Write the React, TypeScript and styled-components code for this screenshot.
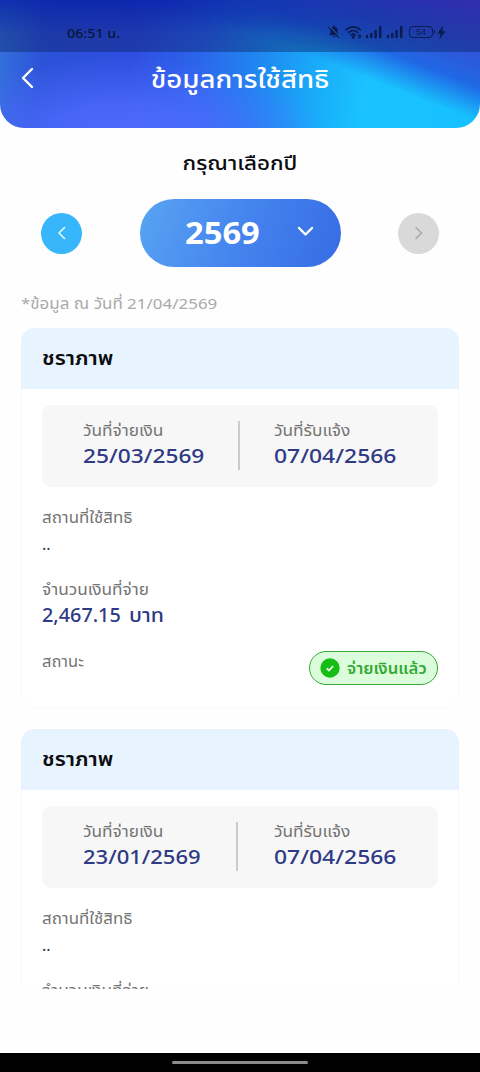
import React from "react";
import styled, { createGlobalStyle } from "styled-components";

const GlobalStyle = createGlobalStyle`
  * { box-sizing: border-box; }
  body { margin: 0; background: #fefefe; font-family: "Noto Sans", "Noto Sans Thai", sans-serif; }
  button { border: 0; padding: 0; font: inherit; }
`;

const Screen = styled.div`
  width: 480px;
  height: 1072px;
  display: flex;
  flex-direction: column;
  overflow: hidden;
  background: #fefefe;
`;

const Header = styled.header`
  height: 128px;
  flex: none;
  border-radius: 0 0 24px 24px;
  overflow: hidden;
  background:
    linear-gradient(21deg, rgba(32, 96, 224, 0) 61%, rgba(34, 88, 224, 0.85) 72%, #2f55d8 83%, #5048d8 100%),
    linear-gradient(180deg, rgba(10, 56, 210, 0.65) 0%, rgba(10, 70, 210, 0) 26%),
    radial-gradient(ellipse 200px 80px at 125px 136px, #4f6bff 0%, rgba(79, 107, 255, 0.75) 40%, rgba(77, 105, 255, 0) 100%),
    linear-gradient(96deg, #3474dc 0%, #2c52d8 10%, #2e4ee0 28%, #2b66ec 42%, #1f88f0 54%, #19acfa 66%, #1ac3ff 76%, #16c0ff 100%);
`;

const StatusBar = styled.div`
  height: 52px;
  display: flex;
  align-items: center;
  justify-content: space-between;
  padding: 13px 34px 0 67px;
  background: linear-gradient(180deg, rgba(0, 0, 110, 0.38), rgba(8, 30, 90, 0.4));
`;

const StatusIcons = styled.div`
  display: flex;
  align-items: center;
  margin-top: -1px;
`;

const TitleBar = styled.div`
  height: 52px;
  display: grid;
  grid-template-columns: 54px 1fr 54px;
  align-items: center;
`;

const IconButton = styled.button`
  display: flex;
  align-items: center;
  justify-content: center;
  height: 40px;
  background: none;
`;

interface TextProps {
  $size: number;
  $line: number;
  $color?: string;
  $weight?: number;
  $stretch?: number;
  $align?: string;
}

const Text = styled.div<TextProps>`
  font-size: ${(p) => p.$size}px;
  line-height: ${(p) => p.$line}px;
  height: ${(p) => p.$line}px;
  color: ${(p) => p.$color ?? "#0b0b10"};
  font-weight: ${(p) => p.$weight ?? 400};
  text-align: ${(p) => p.$align ?? "left"};
  white-space: nowrap;
  transform: scaleX(${(p) => p.$stretch ?? 1});
  transform-origin: ${(p) => p.$align ?? "left"} center;
`;

const Label = styled.div<{ $stretch?: number }>`
  height: 25px;
  font-size: 15px;
  line-height: 25px;
  color: #747474;
  white-space: nowrap;
  transform: scaleX(${(p) => p.$stretch ?? 1.15});
  transform-origin: left center;
`;

const YearSection = styled.section`
  flex: none;
  padding-top: 19px;
`;

const YearPicker = styled.div`
  display: flex;
  align-items: center;
  justify-content: space-between;
  padding: 0 41px;
  margin-top: 20px;
`;

const RoundButton = styled.button<{ $bg: string }>`
  width: 41px;
  height: 41px;
  border-radius: 50%;
  display: flex;
  align-items: center;
  justify-content: center;
  background: ${(p) => p.$bg};
`;

const YearPill = styled.button`
  width: 201px;
  height: 68px;
  border-radius: 34px;
  display: flex;
  align-items: center;
  justify-content: space-between;
  padding: 0 27px 3px 45px;
  background: linear-gradient(110deg, #58a4f2 0%, #4584ee 50%, #366ce4 100%);
`;

const List = styled.main`
  height: 700px;
  flex: none;
  overflow: hidden;
  padding: 0 21px;
  margin-top: 22px;
`;

const Card = styled.article`
  height: 380px;
  margin-top: 11px;
  border-radius: 14px;
  overflow: hidden;
  background: #fff;

  & + & { margin-top: 21px; }
`;

const CardHead = styled.div`
  height: 61px;
  padding: 15px 21px;
  background: #e7f3fe;
`;

const CardBody = styled.div`
  height: 319px;
  padding: 16px 20px 0;
  border: 1px solid #f7fafb;
  border-top: 0;
  border-radius: 0 0 14px 14px;
`;

const Dates = styled.div`
  height: 82px;
  display: flex;
  align-items: center;
  border-radius: 9px;
  padding-left: 41px;
  background: #f7f7f7;
`;

const DateItem = styled.div<{ $width: number }>`
  width: ${(p) => p.$width}px;
  height: 56px;
`;

const Divider = styled.div<{ $gap: number }>`
  width: 2px;
  height: 49px;
  background: #cbcbcb;
  margin: 0 ${(p) => p.$gap}px 1px 0;
`;

const Place = styled.div`
  margin-top: 18px;
`;

const Payment = styled.div`
  margin-top: 19px;
`;

const Amount = styled.div`
  display: flex;
  gap: 7px;
`;

const StatusRow = styled.div`
  display: flex;
  justify-content: space-between;
  margin-top: 22px;
`;

const Badge = styled.div`
  width: 129px;
  height: 34px;
  margin-top: 2px;
  display: flex;
  align-items: center;
  gap: 7px;
  padding-left: 10px;
  border: 1.5px solid #36a936;
  border-radius: 18px;
  background: #dcfddc;
`;

const BottomNav = styled.footer`
  height: 19px;
  margin-top: auto;
  flex: none;
  display: flex;
  justify-content: center;
  padding-top: 8px;
  background: #000;
`;

const Handle = styled.div`
  width: 136px;
  height: 3px;
  border-radius: 2px;
  background: #8b8b8b;
`;

const Chevron = ({ d, w, h, color, stroke }: { d: string; w: number; h: number; color: string; stroke: number }) => (
  <svg width={w} height={h} viewBox={`0 0 ${w} ${h}`} fill="none" stroke={color} strokeWidth={stroke} strokeLinecap="round" strokeLinejoin="round">
    <path d={d} />
  </svg>
);

const ink = "#0b1c50";

const BatteryIcon = styled.div`
  position: relative;
  width: 24px;
  height: 12px;
  margin-left: 3px;
  border: 1px solid ${ink};
  border-radius: 4px;
  color: ${ink};
  font: 9px/10px "Liberation Sans", sans-serif;
  text-align: center;

  &::after {
    content: "";
    position: absolute;
    right: -3px;
    top: 3px;
    width: 1px;
    height: 4px;
    background: ${ink};
  }
`;

const WifiSvg = styled.svg`
  margin: 0 1px 0 4px;
`;

const BoltSvg = styled.svg`
  margin-left: 4px;
`;

const Signal = () => (
  <svg width="21" height="14" viewBox="0 0 21 14" stroke={ink} strokeWidth="2.5" strokeLinecap="round">
    <path d="M3 12v-1M7.3 12V9M11.6 12V6M16.2 12V2" />
  </svg>
);

const SystemIcons = () => (
  <StatusIcons>
    <svg width="14" height="14" viewBox="0 0 14 14">
      <path d="M7 1.4c-2.4 0-3.7 1.8-3.7 4v3L2 10.2h10l-1.3-1.8v-3c0-2.2-1.3-4-3.7-4z" fill={ink} />
      <path d="M5.6 11.3h2.8c-.2 1.4-2.6 1.4-2.8 0zM6.5 0h1v2h-1z" fill={ink} />
      <path d="M2 .9l11 11" stroke="#165ba6" strokeWidth="1.1" />
      <path d="M1.2 1.8l11 11" stroke={ink} strokeWidth="1.1" />
    </svg>
    <WifiSvg width="18" height="15" viewBox="0 0 18 15" fill="none" stroke={ink} strokeWidth="1.7" strokeLinecap="round">
      <path d="M1.2 4.7c4-3.9 10-3.9 14 0M3.7 7.4c2.6-2.5 6.4-2.5 9 0M6.1 10c1.3-1.2 2.9-1.2 4.2 0" />
      <circle cx="8.2" cy="12" r=".8" fill={ink} />
      <path d="M13.6 10.3l1-1.1 1 1.1zM13.6 12.2l1 1.1 1-1.1z" strokeWidth="1" />
    </WifiSvg>
    <Signal />
    <Signal />
    <BatteryIcon>54</BatteryIcon>
    <BoltSvg width="9" height="13" viewBox="0 0 9 13">
      <path d="M5.6.6L.8 7.2h3l-.9 5L8 5.4H5z" fill={ink} stroke={ink} strokeWidth=".6" />
    </BoltSvg>
  </StatusIcons>
);

interface Benefit {
  paid: string;
  notified: string;
  dateWidth: number;
  dateGap: number;
  dateStretch: number;
  amount?: string;
}

const BenefitCard = ({ paid, notified, dateWidth, dateGap, dateStretch, amount }: Benefit) => (
  <Card>
    <CardHead>
      <Text $size={19} $line={30} $weight={600} $stretch={1.145}>ชราภาพ</Text>
    </CardHead>
    <CardBody>
      <Dates>
        <DateItem $width={dateWidth}>
          <Label>วันที่จ่ายเงิน</Label>
          <Text $size={20} $line={26} $color="#2e3a85" $weight={500} $stretch={dateStretch}>{paid}</Text>
        </DateItem>
        <Divider $gap={dateGap} />
        <DateItem $width={125}>
          <Label>วันที่รับแจ้ง</Label>
          <Text $size={20} $line={26} $color="#2e3a85" $weight={500} $stretch={1.145}>{notified}</Text>
        </DateItem>
      </Dates>
      <Place>
        <Label $stretch={1.125}>สถานที่ใช้สิทธิ</Label>
        <Text $size={16} $line={28} $color="#333">..</Text>
      </Place>
      <Payment>
        <Label>จำนวนเงินที่จ่าย</Label>
        {amount && (
          <Amount>
            <Text $size={20} $line={25} $color="#2e3a85" $weight={500} $stretch={0.99}>{amount}</Text>
            <Text $size={20} $line={25} $color="#2e3a85" $weight={500} $stretch={1.06}>บาท</Text>
          </Amount>
        )}
      </Payment>
      {amount && (
        <StatusRow>
          <Label $stretch={1.1}>สถานะ</Label>
          <Badge>
            <svg width="20" height="20" viewBox="0 0 20 20">
              <circle cx="10" cy="10" r="9.7" fill="#15bd15" />
              <path d="M6.7 10.4l2.2 2.1 4.3-4.5" fill="none" stroke="#effff0" strokeWidth="1.8" />
            </svg>
            <Text $size={15} $line={25} $color="#34aa34" $weight={600} $stretch={1.115}>จ่ายเงินแล้ว</Text>
          </Badge>
        </StatusRow>
      )}
    </CardBody>
  </Card>
);

const benefits: Benefit[] = [
  { paid: "25/03/2569", notified: "07/04/2566", dateWidth: 155, dateGap: 34, dateStretch: 1.135, amount: "2,467.15" },
  { paid: "23/01/2569", notified: "07/04/2566", dateWidth: 153, dateGap: 36, dateStretch: 1.1 },
];

export default function App() {
  return (
    <Screen>
      <GlobalStyle />
      <Header>
        <StatusBar>
          <Text $size={13} $line={20} $color="#091638" $weight={500} $stretch={1.1}>06:51 น.</Text>
          <SystemIcons />
        </StatusBar>
        <TitleBar>
          <IconButton aria-label="ย้อนกลับ">
            <Chevron d="M11 2L2 11l9 9" w={13} h={22} color="#fff" stroke={2.4} />
          </IconButton>
          <Text $size={25} $line={40} $color="#fff" $weight={500} $align="center" $stretch={1.105}>ข้อมูลการใช้สิทธิ</Text>
        </TitleBar>
      </Header>
      <YearSection>
        <Text $size={19} $line={32} $weight={500} $align="center" $stretch={1.18}>กรุณาเลือกปี</Text>
        <YearPicker>
          <RoundButton $bg="#38b6fb" aria-label="ปีก่อน">
            <Chevron d="M7.5 1.5L2 7l5.5 5.5" w={9} h={14} color="#e8f9ff" stroke={1.6} />
          </RoundButton>
          <YearPill>
            <Text $size={31} $line={40} $color="#fff" $weight={700} $stretch={1.055}>2569</Text>
            <Chevron d="M2 2l6.5 6.5L15 2" w={17} h={11} color="#fff" stroke={2.4} />
          </YearPill>
          <RoundButton $bg="#d9d9d9" aria-label="ปีถัดไป">
            <Chevron d="M2 1.5L7.5 7 2 12.5" w={9} h={14} color="#aaa" stroke={1.6} />
          </RoundButton>
        </YearPicker>
      </YearSection>
      <List>
        <Text $size={15} $line={28} $color="#aaa" $stretch={1.13}>*ข้อมูล ณ วันที่ 21/04/2569</Text>
        {benefits.map((item) => (
          <BenefitCard key={item.paid} {...item} />
        ))}
      </List>
      <BottomNav>
        <Handle />
      </BottomNav>
    </Screen>
  );
}
